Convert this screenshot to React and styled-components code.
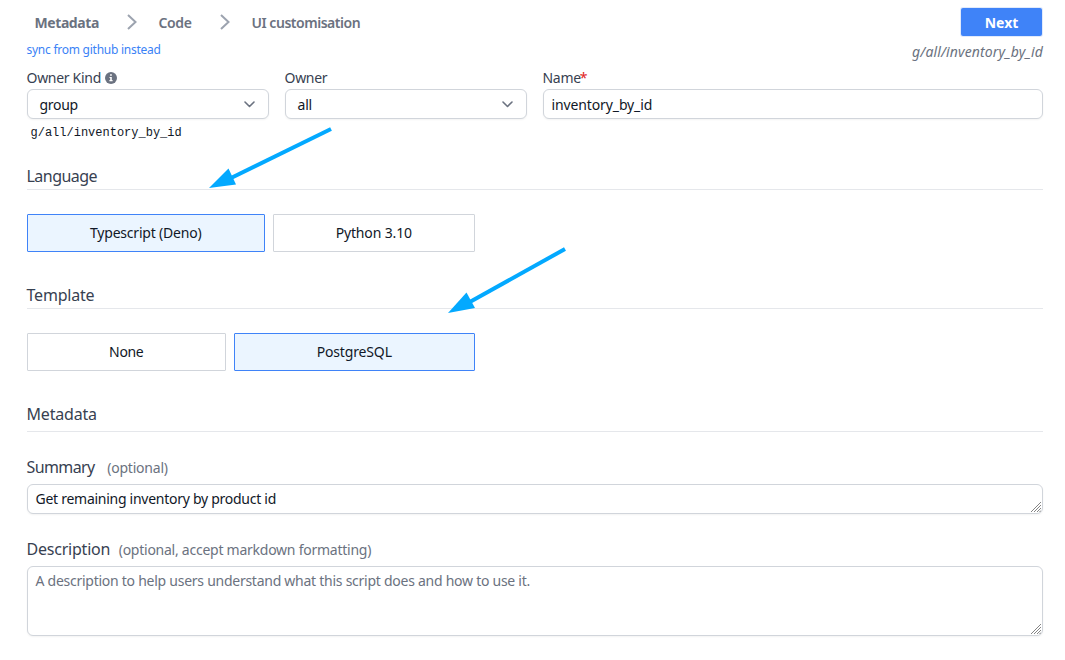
import React from "react";
import styled, { createGlobalStyle } from "styled-components";

const Global = createGlobalStyle`
  *, *::before, *::after { box-sizing: border-box; }
  body { margin: 0; background: #fff; }
  body, button, input, select, textarea {
    font-family: "Noto Sans", "Open Sans", sans-serif;
  }
`;

const Page = styled.main`
  position: relative;
  display: flex;
  flex-direction: column;
  width: 1065px;
  height: 660px;
  padding: 8px 22px 0 27px;
  overflow: hidden;
  background: #fff;
  color: #374151;
  font-size: 14px;
`;

const Text = styled.span`
  margin-left: -0.5px;
  letter-spacing: ${(p) => p.$track || 0}px;
  white-space: pre;
`;

const Header = styled.header`
  display: flex;
  justify-content: space-between;
  height: 60px;
`;

const HeaderLeft = styled.div`
  display: flex;
  flex-direction: column;
`;

const Steps = styled.nav`
  display: flex;
  align-items: center;
  height: 29px;
  padding-left: 8px;
`;

const Step = styled.span`
  width: ${(p) => p.$width}px;
  color: #6b7280;
  font-size: 14px;
  font-weight: ${(p) => (p.$active ? 700 : 600)};
  line-height: 20px;
  white-space: nowrap;
`;

const StepArrow = styled.svg`
  width: 10px;
  height: 16px;
  margin: 0 22.500px 1px 27.500px;
  fill: none;
  stroke: #9ca3af;
  stroke-width: 2;
`;

const SyncLink = styled.a`
  margin-top: 5px;
  color: #3b82f6;
  font-size: 12px;
  line-height: 16px;
`;

const HeaderRight = styled.div`
  display: flex;
  flex-direction: column;
  align-items: flex-end;
`;

const NextButton = styled.button`
  width: 81px;
  height: 28px;
  margin-right: 1px;
  padding: 1px 0 0;
  border: 0;
  border-radius: 2px;
  background: #3f83f8;
  box-shadow: 0 0 0 1px #e1eafb;
  color: #fff;
  font-size: 14px;
  font-weight: 700;
  line-height: 27px;
`;

const PathPreview = styled.em`
  margin-top: 6px;
  color: #6b7280;
  font-size: 14px;
  line-height: 20px;
`;

const FieldRow = styled.div`
  display: grid;
  grid-template-columns: 242px 242px 500px;
  column-gap: 16px;
  height: 98px;
`;

const Field = styled.div`
  display: flex;
  flex-direction: column;
`;

const Label = styled.label`
  display: flex;
  align-items: center;
  height: 20px;
  margin-bottom: 1px;
  font-size: 14px;
  line-height: 20px;
`;

const Required = styled.span`
  margin-left: -1px;
  color: #e02424;
`;

const Info = styled.svg`
  width: 12px;
  height: 12px;
  margin-left: 4px;
`;

const inputBox = `
  border: 1px solid #d1d5db;
  border-radius: 6px;
  background: #fff;
  box-shadow: 0 1px 2px rgba(0, 0, 0, 0.05);
  color: #111827;
  font-size: 14px;
  outline: none;
`;

const SelectBox = styled.div`
  ${inputBox}
  display: flex;
  align-items: center;
  justify-content: space-between;
  height: 30px;
  padding: 1px 13px 0 12px;
  line-height: 20px;
`;

const Caret = styled.svg`
  width: 11px;
  height: 7px;
  margin-bottom: 1px;
  fill: none;
  stroke: #6b7280;
  stroke-width: 1.6;
  stroke-linecap: round;
  stroke-linejoin: round;
`;

const NameInput = styled.input`
  ${inputBox}
  width: 100%;
  height: 30px;
  padding: 0 7.500px;
  letter-spacing: ${(p) => p.$track || 0}px;
`;

const PathCode = styled.code`
  margin-top: 6px;
  padding-left: 3.500px;
  color: #111827;
  font-family: "Liberation Mono", monospace;
  font-size: 12px;
  line-height: 16px;
`;

const SectionTitle = styled.h2`
  height: ${(p) => p.$height || 24}px;
  margin: 0;
  border-bottom: 1px solid #e5e7eb;
  font-size: 16px;
  font-weight: 400;
  line-height: 20px;
`;

const Choices = styled.div`
  display: flex;
  gap: 8px;
  height: 38px;
  margin: 24px 0 33px;
`;

const Choice = styled.button`
  width: ${(p) => p.$width}px;
  height: 38px;
  padding: 0;
  border: 1px solid ${(p) => (p.$selected ? "#3f83f8" : "#d1d5db")};
  border-radius: 1px;
  background: ${(p) => (p.$selected ? "#ebf5ff" : "#fff")};
  color: #111827;
  font-size: 14px;
  line-height: 20px;
`;

const AreaLabel = styled.label`
  display: flex;
  align-items: baseline;
  gap: ${(p) => p.$gap}px;
  height: 24px;
  margin-top: 23px;
  margin-bottom: 5px;
  font-size: 16px;
  line-height: 24px;
`;

const Hint = styled.span`
  color: #6b7280;
  font-size: 14px;
  line-height: 24px;
  letter-spacing: ${(p) => p.$track || 0}px;
`;

const AreaFrame = styled.div`
  position: relative;
  height: ${(p) => p.$height}px;
`;

const Area = styled.textarea`
  ${inputBox}
  display: block;
  width: 1016px;
  height: 100%;
  padding: 4px 7.500px;
  line-height: 20px;
  letter-spacing: ${(p) => p.$track || 0}px;
  overflow: hidden;
  resize: none;
  &::placeholder { color: #6b7280; opacity: 1; }
`;

const Grip = styled.svg`
  position: absolute;
  right: 2px;
  bottom: 2px;
  width: 10px;
  height: 10px;
  fill: none;
  stroke: #777;
  stroke-width: 0.9;
`;

const Annotations = styled.svg`
  position: absolute;
  inset: 0;
  width: 1065px;
  height: 660px;
  pointer-events: none;
  stroke: #03a9ff;
  fill: #03a9ff;
  stroke-width: 4;
`;

function Chevron() {
  return (
    <StepArrow viewBox="0 0 10 16">
      <path d="M1 1l7.5 7L1 15" />
    </StepArrow>
  );
}

function Dropdown({ children, track }) {
  return (
    <SelectBox>
      <Text $track={track}>{children}</Text>
      <Caret viewBox="0 0 11 7">
        <path d="M1 1l4.5 4.5L10 1" />
      </Caret>
    </SelectBox>
  );
}

function ResizableArea({ height, track, ...rest }) {
  return (
    <AreaFrame $height={height}>
      <Area $track={track} {...rest} />
      <Grip viewBox="0 0 10 10">
        <path d="M0 10L10 0M3 10L10 3M6 10L10 6M8.500 10L10 8.500" />
      </Grip>
    </AreaFrame>
  );
}

export default function App() {
  return (
    <>
      <Global />
      <Page>
        <Header>
          <HeaderLeft>
            <Steps>
              <Step $active $width={64}><Text $track={-0.42}>Metadata</Text></Step>
              <Chevron />
              <Step $width={33}><Text $track={-0.4}>Code</Text></Step>
              <Chevron />
              <Step $width={109}><Text $track={-0.47}>UI customisation</Text></Step>
            </Steps>
            <SyncLink><Text $track={-0.25}>sync from github instead</Text></SyncLink>
          </HeaderLeft>
          <HeaderRight>
            <NextButton>Next</NextButton>
            <PathPreview><Text $track={0.12}>g/all/inventory_by_id</Text></PathPreview>
          </HeaderRight>
        </Header>

        <FieldRow>
          <Field>
            <Label>
              <Text $track={-0.3}>Owner Kind</Text>
              <Info viewBox="0 0 12 12">
                <circle cx="6" cy="6" r="6" fill="#6b7280" />
                <path d="M5.1 2.2h1.7v1.6H5.1zM4.5 4.9h2.3v3.2h.8v1.2H4.4V8.1h.8v-2h-.7z" fill="#fff" />
              </Info>
            </Label>
            <Dropdown track={-0.3}>group</Dropdown>
            <PathCode>g/all/inventory_by_id</PathCode>
          </Field>
          <Field>
            <Label><Text $track={-0.3}>Owner</Text></Label>
            <Dropdown track={-0.2}>all</Dropdown>
          </Field>
          <Field>
            <Label>
              <Text $track={-0.3}>Name</Text>
              <Required>*</Required>
            </Label>
            <NameInput $track={-0.12} defaultValue="inventory_by_id" />
          </Field>
        </FieldRow>

        <SectionTitle><Text $track={-0.53}>Language</Text></SectionTitle>
        <Choices>
          <Choice $selected $width={238}><Text $track={-0.2}>Typescript (Deno)</Text></Choice>
          <Choice $width={202}><Text $track={-0.15}>Python 3.10</Text></Choice>
        </Choices>

        <SectionTitle><Text $track={-0.2}>Template</Text></SectionTitle>
        <Choices>
          <Choice $width={199}><Text $track={-0.35}>None</Text></Choice>
          <Choice $selected $width={241}><Text $track={-0.15}>PostgreSQL</Text></Choice>
        </Choices>

        <SectionTitle $height={28}><Text $track={-0.2}>Metadata</Text></SectionTitle>
        <AreaLabel $gap={12.5}>
          <Text $track={-0.6}>Summary</Text>
          <Hint $track={-0.2}>(optional)</Hint>
        </AreaLabel>
        <ResizableArea height={30} track={-0.27} defaultValue="Get remaining inventory by product id" />
        <AreaLabel $gap={8.5}>
          <Text $track={-0.22}>Description</Text>
          <Hint $track={-0.25}>(optional, accept markdown formatting)</Hint>
        </AreaLabel>
        <ResizableArea
          height={70}
          track={-0.26}
          placeholder="A description to help users understand what this script does and how to use it."
        />

        <Annotations viewBox="0 0 1065 660">
          <path d="M331 129L230 178.500" />
          <path stroke="none" d="M209 188l19.500-19.500 7.500 16z" />
          <path d="M565 249L468 303" />
          <path stroke="none" d="M448 313l18.500-20.500 8.500 15.500z" />
        </Annotations>
      </Page>
    </>
  );
}
